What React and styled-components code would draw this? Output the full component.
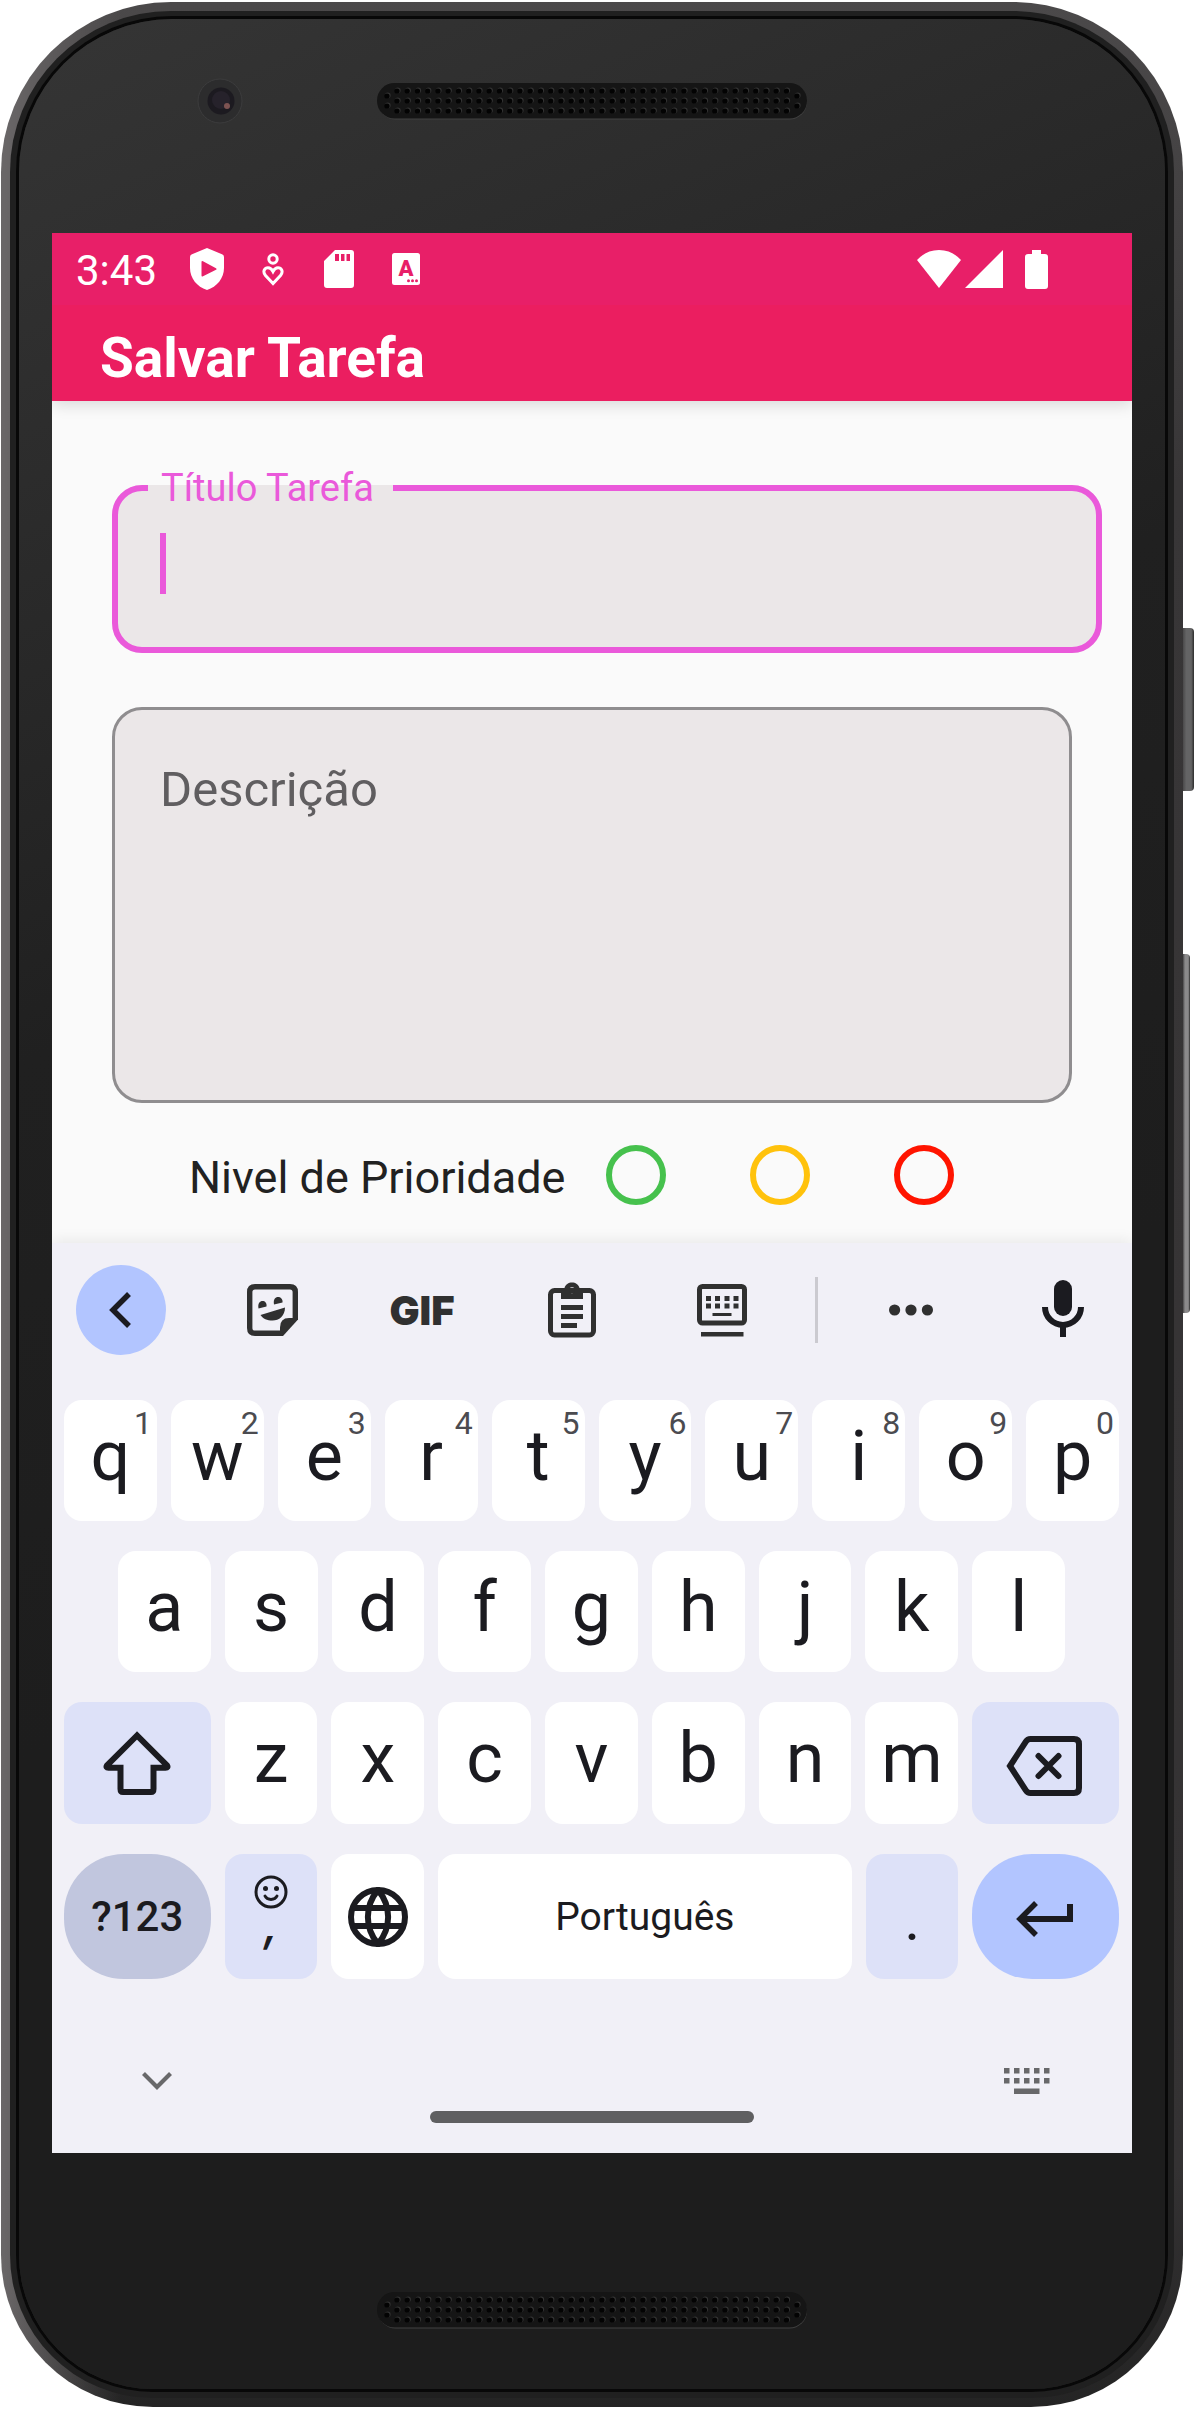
import React, { useState } from "react";
import styled, { createGlobalStyle } from "styled-components";

const pink = "#ea59da";
const ink = "#1b1b20";

const GlobalStyle = createGlobalStyle`
  *, *::before, *::after { box-sizing: border-box; }
  body {
    margin: 0;
    background: #fff;
    font-family: Roboto, "Noto Sans", sans-serif;
  }
  button { font: inherit; color: inherit; border: 0; padding: 0; cursor: pointer; }
  svg { display: block; flex: none; }
`;

/* ---------- device shell ---------- */

const Page = styled.div`
  padding: 2px 11px 1px 1px;
`;

const Device = styled.div`
  position: relative;
  padding: 9px;
  border-radius: 170px 170px 152px 152px;
  background:
    linear-gradient(90deg, #6a6768 0, rgba(74, 72, 73, 0) 120px),
    linear-gradient(180deg, #4b494a 0, #383637 20%, #343233 90%, #242424 100%);
`;

const Bezel = styled.div`
  padding: 8px 9px 9px;
  border-radius: 161px 161px 143px 143px;
  background: #202020;
`;

const Face = styled.div`
  padding: 0 33px;
  border-radius: 153px 153px 134px 134px;
  background: linear-gradient(155deg, #353535 0, #2c2c2c 16%, #202020 36%, #1d1d1d 60%);
  box-shadow: 0 0 0 3px #080808;
`;

const SideKey = styled.span`
  position: absolute;
  left: 100%;
  top: ${(p) => p.$top}px;
  width: ${(p) => p.$width}px;
  height: ${(p) => p.$height}px;
  border-radius: 0 4px 4px 0;
  background: linear-gradient(90deg, #4a494a, ${(p) => p.$shade} 30%, ${(p) => p.$shade} 75%, #2c2c2c);
`;

const TopBezel = styled.div`
  display: grid;
  grid-template-columns: 1fr 431px 1fr;
  align-items: center;
  height: 214px;
  padding: 59px 0 109px;
`;

const BottomBezel = styled.div`
  display: flex;
  justify-content: center;
  align-items: flex-start;
  height: 236px;
  padding-top: 139px;
`;

const CameraSlot = styled.div`
  display: flex;
  justify-content: flex-end;
  padding-right: 134px;
`;

const Screen = styled.main`
  background: #fafafa;
`;

/* ---------- status and app bar ---------- */

const StatusBar = styled.div`
  display: flex;
  align-items: center;
  gap: 33px;
  height: 72px;
  padding: 0 84px 0 24px;
  background: #e81f68;
  color: #fff;
`;

const Clock = styled.time`
  padding-top: 4px;
  font-size: 42px;
  line-height: 48px;
`;

const StatusIcons = styled.div`
  display: flex;
  align-items: center;
  gap: 38px;
`;

const SystemIcons = styled.div`
  display: flex;
  align-items: center;
  gap: 4px;
  margin-left: auto;

  svg:last-child { margin-left: 18px; }
`;

const AppBar = styled.header`
  position: relative;
  display: flex;
  align-items: center;
  height: 96px;
  padding: 10px 48px 0;
  background: #eb1e60;
  box-shadow: 0 4px 14px rgba(0, 0, 0, 0.13);
  clip-path: inset(0 0 -20px 0);
`;

const AppTitle = styled.h1`
  margin: 0;
  color: #fff;
  font-size: 55px;
  line-height: 64px;
  font-weight: 700;
`;

/* ---------- form ---------- */

const Form = styled.form`
  display: flex;
  flex-direction: column;
  padding-top: 67px;
`;

const OutlinedField = styled.fieldset`
  min-width: 0;
  margin: 0 30px 54px 60px;
  padding: 25px 30px 53px;
  border: 6px solid ${pink};
  border-radius: 30px;
  background: #ebe7e8;
`;

const FieldLegend = styled.legend`
  padding: 0 19px 0 13px;
  color: ${pink};
  font-size: 38px;
  line-height: 40px;
`;

const InputRow = styled.div`
  display: flex;
  height: 61px;
  padding-left: 12px;
`;

const Caret = styled.span`
  flex: none;
  width: 6px;
  background: ${pink};
`;

const TextInput = styled.input`
  flex: 1;
  min-width: 0;
  padding: 0;
  border: 0;
  outline: 0;
  background: transparent;
  caret-color: transparent;
  color: ${ink};
  font: 49px/56px Roboto, sans-serif;
`;

const TextArea = styled.textarea`
  display: block;
  height: 396px;
  margin: 0 60px;
  padding: 52px 45px;
  border: 3px solid #8f8d8f;
  border-radius: 30px;
  outline: 0;
  resize: none;
  overflow: hidden;
  background: #ebe7e8;
  color: ${ink};
  font: 49px/56px Roboto, sans-serif;

  &::placeholder { color: #605e60; opacity: 1; }
`;

const PriorityRow = styled.div`
  display: flex;
  align-items: center;
  gap: 41px;
  padding: 42px 40px 38px 137px;
`;

const PriorityLabel = styled.span`
  padding-top: 6px;
  color: #212121;
  font-size: 45px;
  line-height: 54px;
  white-space: nowrap;
`;

const PriorityOptions = styled.div`
  display: flex;
  gap: 84px;
`;

const PriorityRadio = styled.input`
  appearance: none;
  width: 60px;
  height: 60px;
  margin: 0;
  border: 6px solid ${(p) => p.$color};
  border-radius: 50%;

  &:checked { background: ${(p) => p.$color}; }
`;

/* ---------- keyboard ---------- */

const Keyboard = styled.section`
  position: relative;
  background: #f1f0f7;
  color: ${ink};
  box-shadow: 0 -2px 14px rgba(0, 0, 0, 0.08);
  clip-path: inset(-20px 0 0 0);
`;

const ToolStrip = styled.div`
  display: grid;
  grid-template-columns: 121fr repeat(4, 150fr) 39fr 150fr 122fr;
  align-items: center;
  height: 157px;
  padding: 0 24px 23px;
  color: #303030;
`;

const Tool = styled.button`
  display: flex;
  align-items: center;
  justify-content: center;
  height: 90px;
  background: transparent;
  font-family: Inter, Roboto, sans-serif;
  font-size: 40px;
  font-weight: 900;
`;

const BackTool = styled(Tool)`
  width: 90px;
  border-radius: 50%;
  background: #b2c5ff;
  color: ${ink};
`;

const MicTool = styled(Tool)`
  justify-self: end;
  width: 90px;
  color: ${ink};
`;

const Divider = styled.span`
  justify-self: center;
  width: 3px;
  height: 66px;
  background: #cbcad0;
`;

const Keys = styled.div`
  display: flex;
  flex-direction: column;
  gap: 30px;
`;

const KeyRow = styled.div`
  display: flex;
  gap: 14px;
  height: ${(p) => p.$height || 121}px;
  padding: 0 ${(p) => (p.$inset ? "67px 0 66px" : "13px 0 12px")};
`;

const tones = { plain: "#fff", soft: "#dde1f8", muted: "#c1c6de", accent: "#b2c5ff" };

const Key = styled.button`
  position: relative;
  display: flex;
  flex-direction: column;
  align-items: center;
  justify-content: center;
  flex: ${(p) => p.$grow || 93} 1 0;
  min-width: 0;
  border-radius: ${(p) => (p.$pill ? 60 : 18)}px;
  background: ${(p) => tones[p.$tone || "plain"]};
`;

const LetterKey = styled(Key)`
  padding-bottom: 10px;
  font-size: 70px;
  line-height: 82px;
`;

const Hint = styled.sup`
  position: absolute;
  top: 7px;
  right: 5px;
  color: #4b4b50;
  font-size: 32px;
  line-height: 32px;
`;

const SymbolsLabel = styled.span`
  font-size: 42px;
  line-height: 52px;
  font-weight: 500;
`;

const SpaceLabel = styled.span`
  font-size: 39px;
  line-height: 46px;
`;

const CommaKey = styled(Key)`
  justify-content: flex-start;
  padding-top: 21px;
`;

const Comma = styled.span`
  font-family: Inter, Roboto, sans-serif;
  font-size: 48px;
  line-height: 30px;
  font-style: italic;
  font-weight: 500;
`;

const PeriodKey = styled(Key)`
  padding-top: 12px;
  font-size: 50px;
  line-height: 58px;
  font-weight: 500;
`;

const NavArea = styled.div`
  display: flex;
  flex-direction: column;
  gap: 17px;
  padding: 89px 0 30px;
  color: #68686a;
`;

const NavRow = styled.div`
  display: flex;
  align-items: center;
  justify-content: space-between;
  height: 26px;
  padding: 0 82px 0 90px;
`;

const NavButton = styled.button`
  background: transparent;
`;

const HomeBar = styled.div`
  align-self: center;
  width: 30%;
  height: 12px;
  border-radius: 6px;
  background: #5f5f61;
`;

/* ---------- drawings ---------- */

function Speaker() {
  const dots = [];
  for (let c = 0; c < 39; c++) {
    for (let r = 0; r < 3; r++) dots.push([20 + c * 10.25, 8 + r * 10]);
  }
  [10, 420].forEach((x) => dots.push([x, 13], [x, 23]));
  return (
    <svg width="431" height="37" viewBox="0 0 431 37" aria-hidden="true">
      <rect x="1" y="1.5" width="429" height="35" rx="17.5" fill="#424242" />
      <rect x="0" y="0" width="430" height="35.5" rx="17.5" fill="#151515" />
      {dots.map(([x, y], i) => (
        <g key={i}>
          <circle cx={x + 0.8} cy={y - 0.6} r="2.8" fill="#333" />
          <circle cx={x} cy={y} r="2.6" fill="#030303" />
        </g>
      ))}
    </svg>
  );
}

function Camera() {
  return (
    <svg width="46" height="46" viewBox="0 0 46 46" aria-hidden="true">
      <circle cx="23" cy="23" r="22" fill="#2c2c2d" stroke="#3c3c3d" />
      <circle cx="24" cy="23" r="13.5" fill="#1c1a20" />
      <circle cx="24" cy="22" r="9" fill="#26222b" />
      <circle cx="30" cy="28" r="3" fill="#7d5352" />
    </svg>
  );
}

const ShieldIcon = () => (
  <svg width="34" height="42" viewBox="0 0 34 42" fill="#fff" aria-hidden="true">
    <path
      fillRule="evenodd"
      d="M17 0 32 6.2Q34 7 34 9V20C34 30 27 39 17 42 7 39 0 30 0 20V9Q0 7 2 6.2ZM11.5 14V27.5Q11.5 29 13 28.2L26 21.8Q27.200 21 26 20.200L13 13.200Q11.500 12.600 11.500 14Z"
    />
  </svg>
);

const CareIcon = () => (
  <svg width="22" height="33" viewBox="0 0 22 33" fill="none" stroke="#fff" strokeWidth="3" aria-hidden="true">
    <circle cx="11" cy="6" r="4.2" />
    <path d="M11 30.500 3.500 22.500C0 18 3 14.800 6 14.800 8.500 14.800 10 16.500 11 18.500 12 16.500 13.500 14.800 16 14.800 19 14.800 22 18 18.500 22.500Z" />
  </svg>
);

const SdIcon = () => (
  <svg width="32" height="38" viewBox="-2 0 32 38" fill="#fff" aria-hidden="true">
    <path
      fillRule="evenodd"
      d="M11 0H27Q30 0 30 3V35Q30 38 27 38H3Q0 38 0 35V11ZM11 4V11H15V4ZM17 4V11H20.500V4ZM22.500 4V11H26V4Z"
    />
  </svg>
);

const LetterBadgeIcon = () => (
  <svg width="28" height="32" viewBox="0 0 28 32" aria-hidden="true">
    <rect width="28" height="32" rx="2.500" fill="#fff" />
    <text x="14" y="23" textAnchor="middle" fontFamily="Roboto, sans-serif" fontSize="22" fontWeight="900" fill="#e81f68">
      A
    </text>
    <g fill="#e81f68">
      <circle cx="16.500" cy="27.800" r="1.500" />
      <circle cx="20.500" cy="27.800" r="1.500" />
      <circle cx="24.500" cy="27.800" r="1.500" />
    </g>
  </svg>
);

const WifiIcon = () => (
  <svg width="44" height="38" viewBox="0 0 44 38" fill="#fff" aria-hidden="true">
    <path d="M22 38 0 10C6 3.500 13 0 22 0S38 3.500 44 10Z" />
  </svg>
);

const SignalIcon = () => (
  <svg width="38" height="38" viewBox="0 0 38 38" fill="#fff" aria-hidden="true">
    <path d="M0 38 38 0V38Z" />
  </svg>
);

const BatteryIcon = () => (
  <svg width="23" height="39" viewBox="0 0 23 39" fill="#fff" aria-hidden="true">
    <path d="M7 0H16V4H20Q23 4 23 7V36Q23 39 20 39H3Q0 39 0 36V7Q0 4 3 4H7Z" />
  </svg>
);

const BackIcon = () => (
  <svg width="24" height="36" viewBox="0 0 24 36" fill="none" stroke="currentColor" strokeWidth="5.500" aria-hidden="true">
    <path d="M20 2 4 18 20 34" />
  </svg>
);

const StickerIcon = () => (
  <svg width="51" height="52" viewBox="0 0 51 52" fill="currentColor" aria-hidden="true">
    <path
      d="M48.300 36V8Q48.300 2.700 43 2.700H8Q2.700 2.700 2.700 8V44Q2.700 49.300 8 49.300H36"
      fill="none"
      stroke="currentColor"
      strokeWidth="5.400"
    />
    <path d="M51 35.500 36 52H33V43.500Q33 34 42 34H51Z" />
    <path d="M11.500 24.500C10.500 19 13 17 15.500 17S20 19 19.500 22.500Z" />
    <path d="M27 20.500C26 15 28.500 13 31 13S36 15 35.500 18.500Z" />
    <path d="M13.500 31 38 23.500C38 32 32 36.500 25.500 36.500 20 36.500 16 34.800 13.500 31Z" />
  </svg>
);

const ClipboardIcon = () => (
  <svg width="48" height="56" viewBox="0 0 48 56" fill="currentColor" aria-hidden="true">
    <rect x="2.500" y="8.500" width="43" height="44.500" rx="4" fill="none" stroke="currentColor" strokeWidth="5" />
    <path fillRule="evenodd" d="M13 6H16.500C18-1.500 30-1.500 31.500 6H35V17H13ZM24 5.200A3 3 0 1 0 24 11.200 3 3 0 1 0 24 5.200Z" />
    <path d="M13 23H35V28H13ZM13 32H35V37H13ZM13 41H29V46H13Z" />
  </svg>
);

const FloatKeyboardIcon = () => (
  <svg width="50" height="53" viewBox="0 0 50 53" fill="currentColor" aria-hidden="true">
    <rect x="2.500" y="2.500" width="45" height="36.500" rx="3" fill="none" stroke="currentColor" strokeWidth="5" />
    {[9, 18, 27.500, 36.500].map((x) => (
      <g key={x}>
        <rect x={x} y="12" width="5" height="5" />
        <rect x={x} y="19.500" width="5" height="5" />
      </g>
    ))}
    <rect x="15.500" y="29" width="19" height="3" />
    <rect x="4" y="48" width="42.500" height="4.500" />
  </svg>
);

const MoreIcon = () => (
  <svg width="44" height="12" viewBox="0 0 44 12" fill="currentColor" aria-hidden="true">
    <circle cx="5.600" cy="6" r="5.600" />
    <circle cx="22" cy="6" r="5.600" />
    <circle cx="38.400" cy="6" r="5.600" />
  </svg>
);

const MicIcon = () => (
  <svg width="42" height="60" viewBox="0 0 42 60" fill="currentColor" aria-hidden="true">
    <rect x="12" width="18" height="36" rx="9" />
    <path d="M3 27A18 18 0 0 0 39 27" fill="none" stroke="currentColor" strokeWidth="6" />
    <rect x="18" y="45" width="6" height="12" />
  </svg>
);

const ShiftIcon = () => (
  <svg width="68" height="65" viewBox="0 0 68 65" fill="none" stroke="currentColor" strokeWidth="6" aria-hidden="true">
    <path d="M34 4.500 4 34.500Q2.500 36.800 5.500 36.800H17.500V58Q17.500 61 20 61H48Q50.500 61 50.500 58V36.800H62.500Q65.500 36.800 64 34.500Z" />
  </svg>
);

const BackspaceIcon = () => (
  <svg width="80" height="66" viewBox="0 -6 80 66" fill="none" stroke="currentColor" strokeWidth="6" aria-hidden="true">
    <path d="M4 30 20 5.500Q21.500 3 24.500 3H68Q73 3 73 8V52Q73 57 68 57H24.500Q21.500 57 20 54.500Z" />
    <path d="M32.500 20 52.500 40M52.500 20 32.500 40" strokeLinecap="round" />
  </svg>
);

const EmojiIcon = () => (
  <svg width="34" height="34" viewBox="0 0 34 34" fill="currentColor" aria-hidden="true">
    <circle cx="17" cy="17" r="15" fill="none" stroke="currentColor" strokeWidth="3" />
    <circle cx="11.500" cy="13.500" r="2.500" />
    <circle cx="22.500" cy="13.500" r="2.500" />
    <path d="M11 21C13 25.500 21 25.500 23 21" fill="none" stroke="currentColor" strokeWidth="3" strokeLinecap="round" />
  </svg>
);

const GlobeIcon = () => (
  <svg width="60" height="60" viewBox="0 0 60 60" fill="none" stroke="currentColor" strokeWidth="6" aria-hidden="true">
    <circle cx="30" cy="30" r="27" />
    <path d="M30 3C16.500 19 16.500 41 30 57 43.500 41 43.500 19 30 3ZM4.500 21H55.500M4.500 39H55.500" />
  </svg>
);

const EnterIcon = () => (
  <svg width="60" height="40" viewBox="0 -4 60 40" fill="none" stroke="currentColor" strokeWidth="6" aria-hidden="true">
    <path d="M20 2 4 18 20 34" strokeWidth="5.500" />
    <path d="M5 18H54V3" />
  </svg>
);

const HideIcon = () => (
  <svg width="30" height="18" viewBox="0 0 30 18" fill="none" stroke="currentColor" strokeWidth="4.200" aria-hidden="true">
    <path d="M1.500 1.500 15 15 28.500 1.500" />
  </svg>
);

const SwitchIcon = () => (
  <svg width="46" height="26" viewBox="0 0 46 26" fill="currentColor" aria-hidden="true">
    {[0, 10, 20, 30, 40].map((x) => (
      <g key={x}>
        <rect x={x} y="0" width="5.500" height="5.500" />
        <rect x={x} y="10" width="5.500" height="5.500" />
      </g>
    ))}
    <rect x="10" y="20.500" width="25.500" height="5.500" />
  </svg>
);

/* ---------- page ---------- */

const priorities = [
  { id: "baixa", name: "Baixa", color: "#46c14d" },
  { id: "media", name: "Média", color: "#ffc20c" },
  { id: "alta", name: "Alta", color: "#ff1400" },
];

const Letters = ({ chars, hints, onType }) =>
  [...chars].map((ch, i) => (
    <LetterKey key={ch} type="button" onClick={() => onType(ch)}>
      {ch}
      {hints && <Hint>{hints[i]}</Hint>}
    </LetterKey>
  ));

export default function App() {
  const [title, setTitle] = useState("");
  const type = (ch) => setTitle((t) => t + ch);

  return (
    <Page>
      <GlobalStyle />
      <Device>
        <SideKey $top={626} $width={11} $height={163} $shade="#646465" />
        <SideKey $top={952} $width={7} $height={359} $shade="#8b8a8b" />
        <Bezel>
          <Face>
            <TopBezel>
              <CameraSlot>
                <Camera />
              </CameraSlot>
              <div>
                <Speaker />
              </div>
            </TopBezel>

            <Screen>
              <StatusBar>
                <Clock>3:43</Clock>
                <StatusIcons>
                  <ShieldIcon />
                  <CareIcon />
                  <SdIcon />
                  <LetterBadgeIcon />
                </StatusIcons>
                <SystemIcons>
                  <WifiIcon />
                  <SignalIcon />
                  <BatteryIcon />
                </SystemIcons>
              </StatusBar>
              <AppBar>
                <AppTitle>Salvar Tarefa</AppTitle>
              </AppBar>

              <Form onSubmit={(e) => e.preventDefault()}>
                <OutlinedField>
                  <FieldLegend>
                    <label htmlFor="titulo">Título Tarefa</label>
                  </FieldLegend>
                  <InputRow>
                    {!title && <Caret />}
                    <TextInput id="titulo" type="text" value={title} onChange={(e) => setTitle(e.target.value)} />
                  </InputRow>
                </OutlinedField>
                <TextArea aria-label="Descrição" placeholder="Descrição" />
                <PriorityRow role="radiogroup" aria-labelledby="prioridade">
                  <PriorityLabel id="prioridade">Nivel de Prioridade</PriorityLabel>
                  <PriorityOptions>
                    {priorities.map((p) => (
                      <PriorityRadio key={p.id} type="radio" name="prioridade" value={p.id} aria-label={p.name} $color={p.color} />
                    ))}
                  </PriorityOptions>
                </PriorityRow>
              </Form>

              <Keyboard>
                <ToolStrip>
                  <BackTool type="button" aria-label="Voltar"><BackIcon /></BackTool>
                  <Tool type="button" aria-label="Figurinhas"><StickerIcon /></Tool>
                  <Tool type="button">GIF</Tool>
                  <Tool type="button" aria-label="Área de transferência"><ClipboardIcon /></Tool>
                  <Tool type="button" aria-label="Teclado flutuante"><FloatKeyboardIcon /></Tool>
                  <Divider />
                  <Tool type="button" aria-label="Mais"><MoreIcon /></Tool>
                  <MicTool type="button" aria-label="Microfone"><MicIcon /></MicTool>
                </ToolStrip>
                <Keys>
                  <KeyRow>
                    <Letters chars="qwertyuiop" hints="1234567890" onType={type} />
                  </KeyRow>
                  <KeyRow $inset>
                    <Letters chars="asdfghjkl" onType={type} />
                  </KeyRow>
                  <KeyRow $height={122}>
                    <Key type="button" $grow={147} $tone="soft" aria-label="Shift"><ShiftIcon /></Key>
                    <Letters chars="zxcvbnm" onType={type} />
                    <Key type="button" $grow={147} $tone="soft" aria-label="Apagar" onClick={() => setTitle((t) => t.slice(0, -1))}>
                      <BackspaceIcon />
                    </Key>
                  </KeyRow>
                  <KeyRow $height={125}>
                    <Key type="button" $grow={147} $tone="muted" $pill>
                      <SymbolsLabel>?123</SymbolsLabel>
                    </Key>
                    <CommaKey type="button" $tone="soft" onClick={() => type(",")}>
                      <EmojiIcon />
                      <Comma>,</Comma>
                    </CommaKey>
                    <Key type="button" aria-label="Idioma"><GlobeIcon /></Key>
                    <Key type="button" $grow={415} onClick={() => type(" ")}>
                      <SpaceLabel>Português</SpaceLabel>
                    </Key>
                    <PeriodKey type="button" $tone="soft" onClick={() => type(".")}>.</PeriodKey>
                    <Key type="button" $grow={147} $tone="accent" $pill aria-label="Enter"><EnterIcon /></Key>
                  </KeyRow>
                </Keys>
                <NavArea>
                  <NavRow>
                    <NavButton type="button" aria-label="Ocultar teclado"><HideIcon /></NavButton>
                    <NavButton type="button" aria-label="Trocar teclado"><SwitchIcon /></NavButton>
                  </NavRow>
                  <HomeBar />
                </NavArea>
              </Keyboard>
            </Screen>

            <BottomBezel>
              <Speaker />
            </BottomBezel>
          </Face>
        </Bezel>
      </Device>
    </Page>
  );
}
